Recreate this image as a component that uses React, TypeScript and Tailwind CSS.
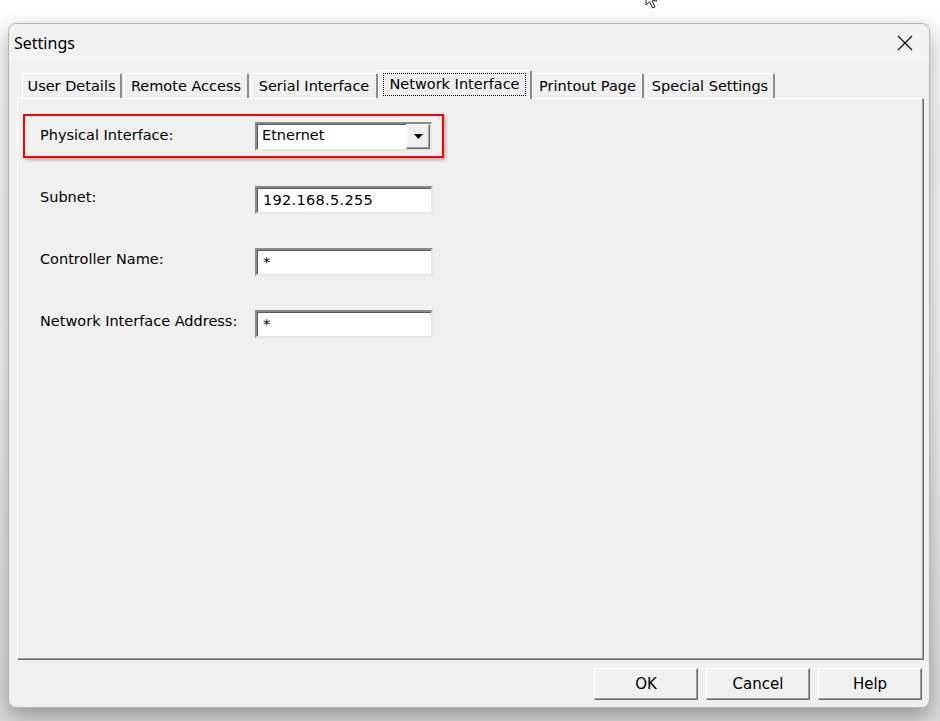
import React, { useState } from "react";

const font = { fontFamily: '"DejaVu Sans", Verdana, sans-serif' };

type Tab = { label: string; width: string };

const TABS: Tab[] = [
  { label: "User Details", width: "w-[100px]" },
  { label: "Remote Access", width: "w-[125px]" },
  { label: "Serial Interface", width: "w-[127px]" },
  { label: "Network Interface", width: "w-[154px]" },
  { label: "Printout Page", width: "w-[112px]" },
  { label: "Special Settings", width: "w-[129px]" },
];

// sunken 3d border used by edit boxes
const sunken =
  "border-2 border-t-[#8a8a8a] border-l-[#8a8a8a] border-r-[#e6e6e6] border-b-[#e6e6e6] bg-white shadow-[inset_1px_1px_0_#5a5a5a]";

const TextBox: React.FC<{ value: string }> = ({ value }) => (
  <div className={`${sunken} w-[178px] h-[28px] flex items-center pl-[6px] pt-[1px] text-[14.5px] tracking-[0.3px] text-black`}>
    {value}
  </div>
);

const DialogButton: React.FC<{ label: string }> = ({ label }) => (
  <button
    type="button"
    className="w-[104px] h-[32px] bg-[#f0f0f0] border border-t-white border-l-white border-r-[#696969] border-b-[#696969] shadow-[inset_-1px_-1px_0_#a0a0a0] text-[15px] text-black flex items-center justify-center"
  >
    {label}
  </button>
);

const FormRow: React.FC<{ label: string; value: string }> = ({ label, value }) => (
  <div className="flex items-start pl-[22px]">
    <div className="w-[215px] text-[14.5px] leading-[18px] mt-[2px] text-black whitespace-nowrap">{label}</div>
    <TextBox value={value} />
  </div>
);

export default function App() {
  const [active, setActive] = useState(3);

  return (
    <div
      className="relative w-[940px] h-[721px] bg-gradient-to-b from-white via-[#f7f7f7] to-[#dcdcdc] pt-[23px] pl-[8px] overflow-hidden"
      style={font}
    >
      {/* mouse pointer peeking at the top */}
      <svg className="absolute left-[644px] top-[-9px]" width="20" height="20" viewBox="0 0 20 20">
        <path d="M2 0 L2 14 L5.5 10.8 L8.5 17 L11 16 L8 9.8 L13 9.8 Z" fill="white" stroke="#222" strokeWidth="1" />
      </svg>

      <div className="w-[922px] h-[685px] rounded-[8px] border border-[#b4b4b4] bg-[#f0f0f0] shadow-[0_8px_22px_rgba(0,0,0,0.35)] flex flex-col">
        {/* title bar */}
        <div className="h-[38px] flex items-center justify-between pl-[5px] pr-[16px] bg-[#f3f3f3] rounded-t-[8px]">
          <span className="text-[16px] text-black" style={{ fontFamily: '"Noto Sans", "Open Sans", sans-serif' }}>
            Settings
          </span>
          <svg width="16" height="16" viewBox="0 0 16 16">
            <path d="M1 1 L15 15 M15 1 L1 15" stroke="#111" strokeWidth="1.3" />
          </svg>
        </div>

        {/* tabs */}
        <div className="mt-[8px] h-[28px] flex items-end pl-[13px]">
          {TABS.map((t, i) => {
            const selected = i === active;
            const gap = i === 0 || i === active || i === active + 1 ? "" : "ml-[2px]";
            return selected ? (
              <button
                key={t.label}
                type="button"
                onClick={() => setActive(i)}
                className={`${t.width} h-[29px] -mb-[1px] relative z-10 bg-[#f0f0f0] rounded-t-[2px] border-t border-l border-t-white border-l-white border-r-2 border-r-[#8a8a8a] px-[4px] pt-[2px] pb-[3px] text-[14.5px] text-black whitespace-nowrap`}
              >
                <span className="block h-full border border-dotted border-black leading-[20px]">{t.label}</span>
              </button>
            ) : (
              <button
                key={t.label}
                type="button"
                onClick={() => setActive(i)}
                className={`${t.width} ${gap} h-[25px] bg-[#f0f0f0] rounded-t-[2px] border-t border-l border-t-white border-l-white border-r-2 border-r-[#8a8a8a] text-[14.5px] leading-[23px] text-black whitespace-nowrap`}
              >
                {t.label}
              </button>
            );
          })}
        </div>

        {/* tab page */}
        <div className="ml-[8px] w-[906px] h-[561px] border border-t-white border-l-white border-r-[#a0a0a0] border-b-[#a0a0a0] shadow-[1px_1px_0_#696969] bg-[#f0f0f0]">
          {active === 3 && (
            <div className="pt-[15px] flex flex-col">
              <div className="ml-[5px] w-[421px] h-[44px] border-2 border-[#ff0000] shadow-[2px_2px_3px_rgba(0,0,0,0.25)] flex items-center pl-[15px]">
                <div className="w-[215px] text-[14.5px] text-black">Physical Interface:</div>
                <div className={`${sunken} w-[177px] h-[29px] flex items-center justify-between pl-[5px]`}>
                  <span className="text-[14.5px] text-black">Etnernet</span>
                  <div className="w-[24px] h-[25px] bg-[#f0f0f0] border border-t-white border-l-white border-r-[#696969] border-b-[#696969] shadow-[inset_-1px_-1px_0_#a0a0a0] flex items-center justify-center">
                    <svg width="9" height="5" viewBox="0 0 9 5">
                      <path d="M0 0 L9 0 L4.5 5 Z" fill="#000" />
                    </svg>
                  </div>
                </div>
              </div>

              <div className="mt-[28px] flex flex-col gap-[34px]">
                <FormRow label="Subnet:" value="192.168.5.255" />
                <FormRow label="Controller Name:" value="*" />
                <FormRow label="Network Interface Address:" value="*" />
              </div>
            </div>
          )}
        </div>

        {/* buttons */}
        <div className="mt-[9px] flex justify-end gap-[8px] pr-[7px]">
          <DialogButton label="OK" />
          <DialogButton label="Cancel" />
          <DialogButton label="Help" />
        </div>
      </div>
    </div>
  );
}
